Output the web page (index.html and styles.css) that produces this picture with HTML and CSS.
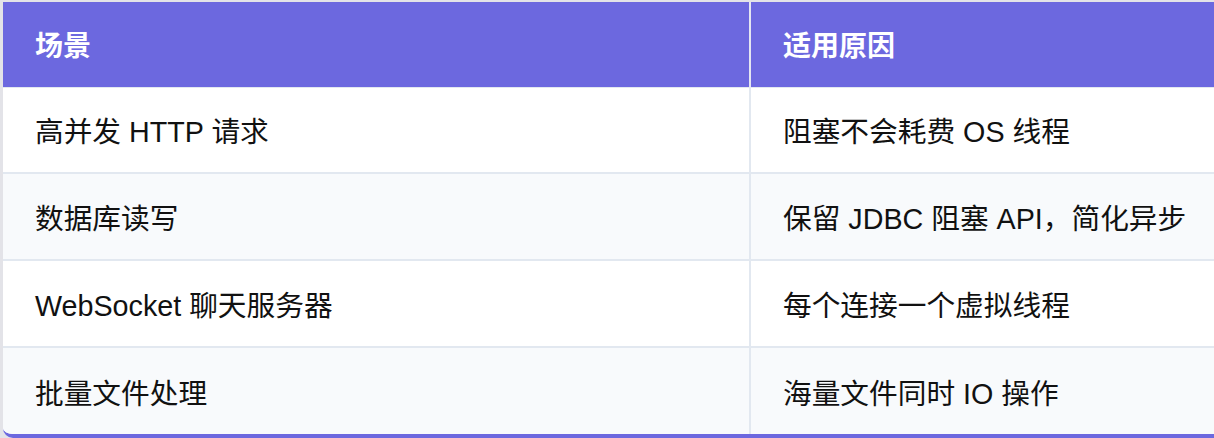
FILE: index.html
```html
<!DOCTYPE html>
<html lang="zh">
<head>
<meta charset="utf-8">
<link rel="stylesheet" href="styles.css">
</head>
<body>
<div class="wrap">
  <table class="grid">
    <thead>
      <tr><th class="c1">场景</th><th>适用原因</th></tr>
    </thead>
    <tbody>
      <tr><td class="c1">高并发 HTTP 请求</td><td>阻塞不会耗费 OS 线程</td></tr>
      <tr class="alt"><td class="c1">数据库读写</td><td>保留 JDBC 阻塞 API，简化异步</td></tr>
      <tr><td class="c1">WebSocket 聊天服务器</td><td>每个连接一个虚拟线程</td></tr>
      <tr class="alt"><td class="c1">批量文件处理</td><td>海量文件同时 IO 操作</td></tr>
    </tbody>
  </table>
</div>
</body>
</html>
```
FILE: styles.css
```css
html, body {
  margin: 0;
  padding: 0;
  background: #e3e3e8;
  overflow: hidden;
}
body {
  padding: 2px 0 0 3px;
  font-family: "Liberation Sans", "Noto Sans CJK SC", sans-serif;
}
.wrap {
  border-bottom: 4px solid #6c68df;
  border-radius: 0 0 0 10px;
  overflow: hidden;
  background: #fff;
}
.grid {
  width: 100%;
  border-collapse: collapse;
  table-layout: fixed;
}
.grid th, .grid td {
  text-align: left;
  padding: 0 0 0 32px;
  font-size: 28.7px;
  height: 85px;
  box-sizing: border-box;
  white-space: nowrap;
  overflow: hidden;
}
.grid th {
  background: #6c68df;
  color: #fff;
  font-weight: 700;
  font-size: 28px;
  border-left: 2px solid #e4e6f2;
}
.grid th.c1, .grid td.c1 {
  width: 747px;
  border-left: none;
}
.grid td {
  color: #111;
  border-top: 2px solid #e2e8f0;
  border-left: 2px solid #e2e8f0;
  height: 87px;
}
.grid tbody tr:first-child td {
  border-top: 1px solid #e2e8f0;
  height: 86px;
}
.grid td.c1 {
  border-left: none;
}
.grid tr.alt td {
  background: #f8fafc;
}
```
